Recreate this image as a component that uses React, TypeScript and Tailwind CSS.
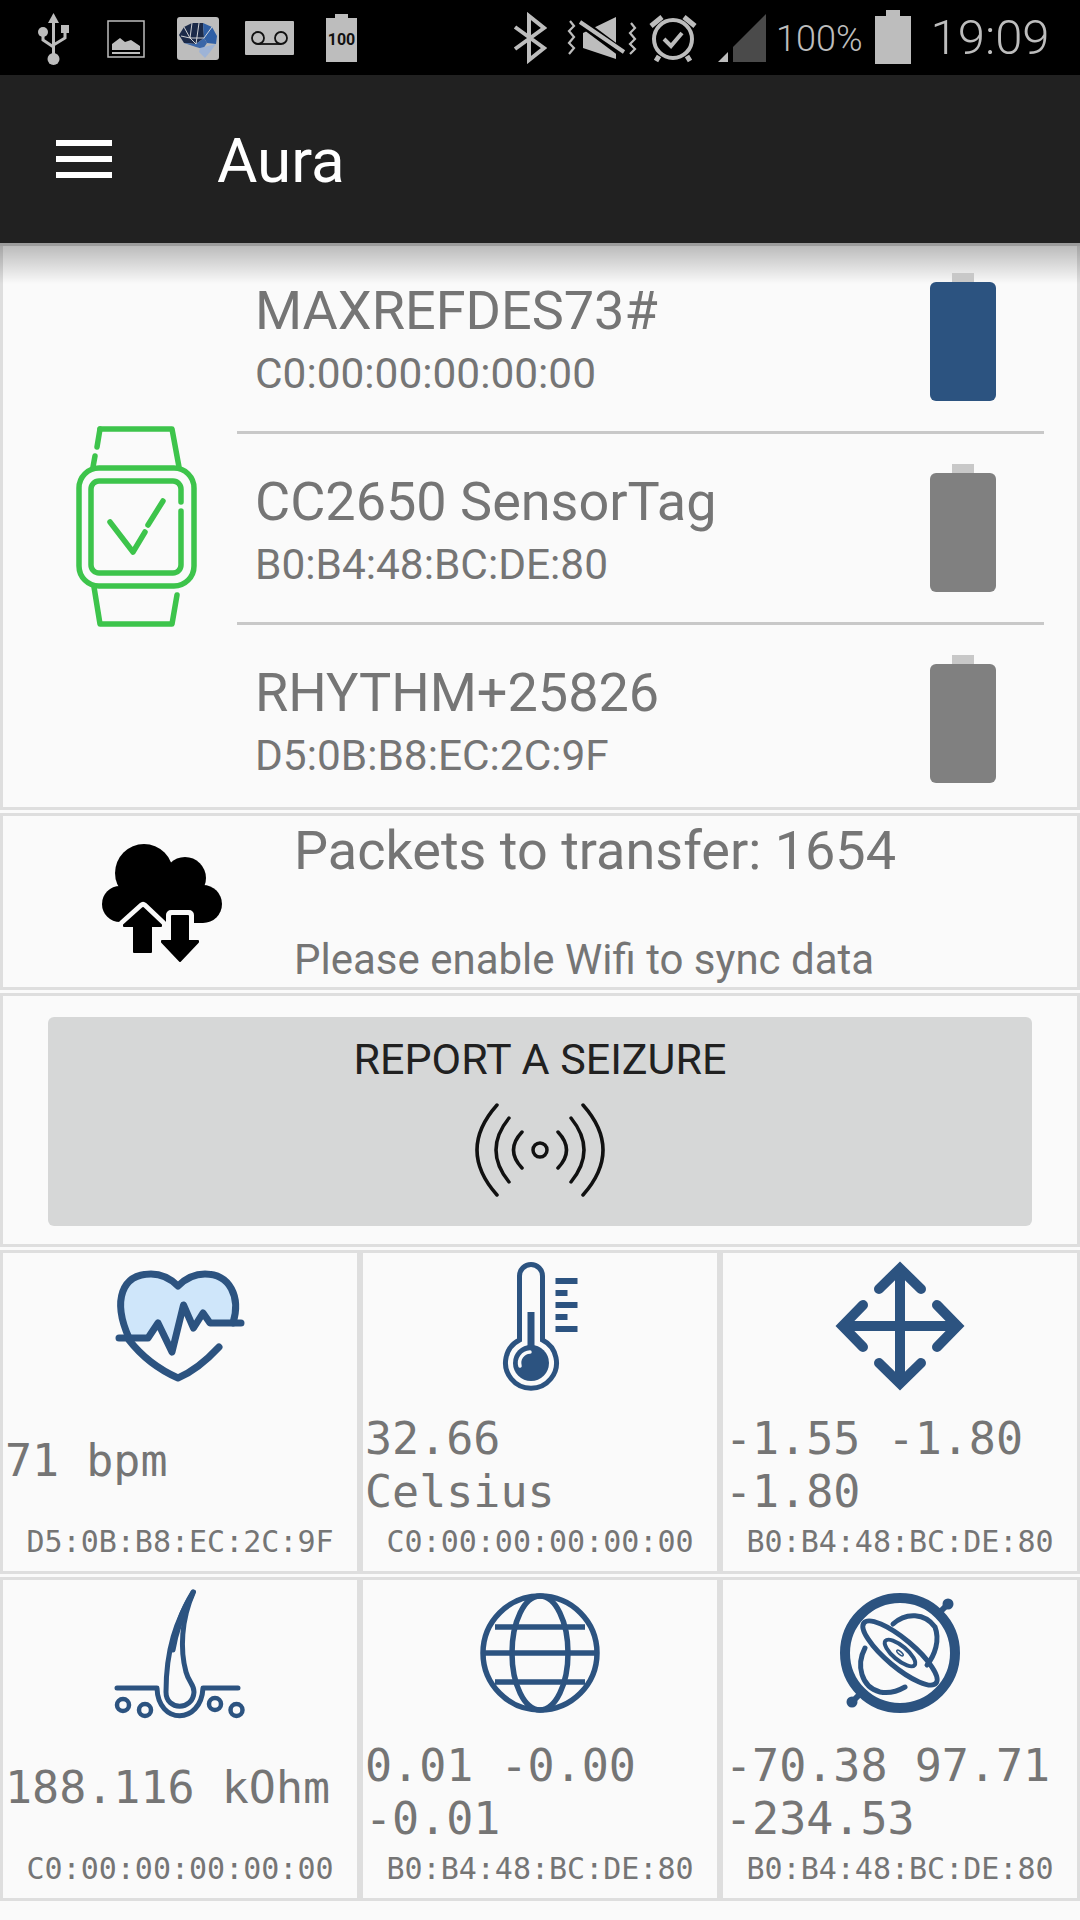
const BLUE = "#2c5380";

function StatusBar() {
  return (
    <div className="flex h-[75px] items-start bg-black text-[#bdbdbd]">
      {/* usb */}
      <svg viewBox="36 12 36 54" className="mt-[12px] ml-[36px] h-[54px] w-[36px]" fill="none" stroke="#bdbdbd" strokeWidth="3">
        <path d="M53.5 23V56M43 34V40L53.5 47M65 33V38L53.5 45" />
        <path d="M53.5 13L59 23H48Z" fill="#bdbdbd" stroke="none" />
        <circle cx="53.5" cy="59" r="6" fill="#bdbdbd" stroke="none" />
        <circle cx="43" cy="32" r="5" fill="#bdbdbd" stroke="none" />
        <rect x="61" y="25" width="8" height="8" fill="#bdbdbd" stroke="none" />
      </svg>
      {/* gallery */}
      <svg viewBox="107 20 38 38" className="mt-[20px] ml-[35px] h-[38px] w-[38px]">
        <rect x="108" y="21" width="36" height="36" fill="none" stroke="#bdbdbd" strokeWidth="1.5" />
        <path d="M112 50V44L120 38L125 42L131 40L140 46V50Z" fill="#bdbdbd" />
        <rect x="112" y="52" width="28" height="2" fill="#bdbdbd" />
      </svg>
      {/* app icon */}
      <svg viewBox="177 17 42 43" className="mt-[17px] ml-[32px] h-[43px] w-[42px]">
        <rect x="177" y="17" width="42" height="43" rx="3" fill="#bdbdbd" />
        <path d="M179 35L184 27L192 23L203 23L204 38L196 44L184 43Z" fill="#1b2a49" />
        <path d="M203 23L212 27L217 36L216 44L207 43L204 38Z" fill="#2f5fa5" />
        <path d="M184 43L196 44L204 38L207 43L203 49L196 47Z" fill="#3a66a8" />
        <path d="M200 48L216 44L210 52L205 58L199 52Z" fill="#9db3d6" />
        <path d="M184 27L190 38L181 36M192 23L190 38L204 38M199 23L196 44M190 38L196 44M212 27L204 38" fill="none" stroke="#e2e2e2" strokeWidth="0.9" />
      </svg>
      {/* voicemail */}
      <svg viewBox="245 21 49 34" className="mt-[21px] ml-[26px] h-[34px] w-[49px]">
        <rect x="245" y="21" width="49" height="34" rx="1" fill="#bdbdbd" />
        <circle cx="258" cy="38" r="6" fill="none" stroke="#111" strokeWidth="1.8" />
        <circle cx="281" cy="38" r="6" fill="none" stroke="#111" strokeWidth="1.8" />
        <path d="M258 44H281" stroke="#111" strokeWidth="1.8" />
      </svg>
      {/* battery 100 */}
      <div className="mt-[14px] ml-[32px] flex w-[31px] flex-col items-center">
        <div className="h-[4px] w-[13px] bg-[#bdbdbd]" />
        <div className="flex h-[44px] w-[31px] items-center justify-center bg-[#bdbdbd] font-['Roboto',sans-serif] text-[16px] leading-none font-bold text-[#111]">
          100
        </div>
      </div>
      {/* bluetooth */}
      <svg viewBox="512 12 36 52" className="mt-[12px] ml-[155px] h-[52px] w-[36px]" fill="none" stroke="#bdbdbd" strokeWidth="4">
        <path d="M515 27L544 48L529 60V16L544 28L515 49" />
      </svg>
      {/* mute + vibrate */}
      <svg viewBox="566 15 71 46" className="mt-[15px] ml-[18px] h-[46px] w-[71px]">
        <path d="M583 33L616 17V59L583 48Z" fill="#bdbdbd" />
        <path d="M578 20L625 55" stroke="#000" strokeWidth="9" />
        <path d="M580 22L624 52" stroke="#bdbdbd" strokeWidth="4" />
        <path d="M570 21L574 26L569 31L574 37L569 43L574 48L569 54" fill="none" stroke="#bdbdbd" strokeWidth="2.2" />
        <path d="M631 23L635 28L630 33L635 39L630 44L635 49L630 54" fill="none" stroke="#bdbdbd" strokeWidth="2.2" />
      </svg>
      {/* alarm */}
      <svg viewBox="648 13 50 50" className="mt-[13px] ml-[11px] h-[50px] w-[50px]" fill="none" stroke="#bdbdbd">
        <circle cx="673" cy="39" r="19" strokeWidth="4" />
        <path d="M651 26L662 17M695 26L684 17" strokeWidth="5" />
        <path d="M659 56L656 61M687 56L690 61" strokeWidth="5" />
        <path d="M664 39L671 46L682 33" strokeWidth="4" />
      </svg>
      {/* signal */}
      <svg viewBox="718 14 48 48" className="mt-[14px] ml-[20px] h-[48px] w-[48px]">
        <path d="M718 62L728 52V62Z" fill="#bdbdbd" />
        <path d="M733 62V47L766 14V62Z" fill="#4a4a4a" />
      </svg>
      <span className="mt-[18px] ml-[10px] font-['Roboto',sans-serif] text-[36px] leading-[42px] font-light text-[#bdbdbd]">100%</span>
      <div className="mt-[10px] ml-[12px] flex w-[36px] flex-col items-center">
        <div className="h-[6px] w-[14px] bg-[#bdbdbd]" />
        <div className="h-[48px] w-[36px] bg-[#bdbdbd]" />
      </div>
      <span className="mt-[9px] ml-[20px] font-['Roboto',sans-serif] text-[49px] leading-[58px] font-light text-[#bdbdbd]">19:09</span>
    </div>
  );
}

function Toolbar() {
  return (
    <div className="flex h-[168px] items-center bg-[#212121]">
      <div className="ml-[56px] flex w-[56px] flex-col gap-[10px]">
        <div className="h-[6px] bg-white" />
        <div className="h-[6px] bg-white" />
        <div className="h-[6px] bg-white" />
      </div>
      <span className="mt-[4px] ml-[105px] font-['Roboto',sans-serif] text-[62px] leading-none text-white">Aura</span>
    </div>
  );
}

function Battery({ color }: { color: string }) {
  return (
    <div className="relative z-10 flex w-[66px] flex-col items-center">
      <div className="h-[9px] w-[22px] bg-[#c8c8c8]" />
      <div className="h-[119px] w-[66px] rounded-[6px]" style={{ backgroundColor: color }} />
    </div>
  );
}

function DeviceRow({ name, mac, color, rowClass }: { name: string; mac: string; color: string; rowClass: string }) {
  return (
    <div className={rowClass}>
      <div className="pt-[6px] pl-[18px] font-['Roboto',sans-serif] text-[#757575]">
        <div className="text-[54px] leading-[64px]">{name}</div>
        <div className="text-[42.4px] leading-[61px]">{mac}</div>
      </div>
      <div className="mr-[48px]">
        <Battery color={color} />
      </div>
    </div>
  );
}

function DevicesCard() {
  return (
    <div className="flex h-[567px] border-[3px] border-[#dedede] bg-[#fafafa]">
      <div className="flex w-[234px] items-center">
        <svg viewBox="3 427 234 201" className="h-[201px] w-[234px]" fill="none" stroke="#3dc44b" strokeWidth="5.5" strokeLinecap="round" strokeLinejoin="round">
          <rect x="79" y="469" width="115" height="118" rx="20" />
          <path d="M181 512V566a8 8 0 0 1-8 8H99a8 8 0 0 1-8-8V490a8 8 0 0 1 8-8H173a8 8 0 0 1 8 8V503" />
          <path d="M100 430L97 448M95 457L93 468" />
          <path d="M100 430H172L179 468" />
          <path d="M94 588L100 625H172L177 596" />
          <path d="M110 523L133 553L145 533M148 526L163 502" />
        </svg>
      </div>
      <div className="w-[807px]">
        <DeviceRow
          name="MAXREFDES73#"
          mac="C0:00:00:00:00:00"
          color={BLUE}
          rowClass="flex h-[185px] items-start justify-between pt-[27px]"
        />
        <div className="h-[3px] bg-[#c8c8c8]" />
        <DeviceRow
          name="CC2650 SensorTag"
          mac="B0:B4:48:BC:DE:80"
          color="#808080"
          rowClass="flex h-[188px] items-start justify-between pt-[30px]"
        />
        <div className="h-[3px] bg-[#c8c8c8]" />
        <DeviceRow
          name="RHYTHM+25826"
          mac="D5:0B:B8:EC:2C:9F"
          color="#808080"
          rowClass="flex h-[182px] items-start justify-between pt-[30px]"
        />
      </div>
    </div>
  );
}

function SyncCard() {
  return (
    <div className="flex h-[177px] border-[3px] border-[#dedede] bg-[#fafafa]">
      <svg viewBox="3 816 291 171" className="h-[171px] w-[291px]">
        <circle cx="144" cy="873" r="29" />
        <circle cx="185" cy="878" r="21" />
        <circle cx="120" cy="904" r="18" />
        <circle cx="203" cy="904" r="19" />
        <rect x="120" y="878" width="83" height="45" />
        <g stroke="#fafafa" strokeWidth="10" strokeLinejoin="round" fill="#fafafa">
          <path d="M143 907L162 925V927H152V953H133V927H123V925Z" />
          <path d="M171 915H189V940H199V942L180 962L161 942V940H171Z" />
        </g>
        <g stroke="#000" strokeWidth="2" strokeLinejoin="round">
          <path d="M143 908L161 925V926H151V952H134V926H124V925Z" />
          <path d="M172 916H188V941H198V942L180 961L162 942V941H172Z" />
        </g>
      </svg>
      <div className="flex flex-1 flex-col justify-between font-['Roboto',sans-serif] text-[#757575]">
        <div className="text-[54px] leading-[70px]">Packets to transfer: 1654</div>
        <div className="text-[42px] leading-[54px]">Please enable Wifi to sync data</div>
      </div>
    </div>
  );
}

function ReportCard() {
  return (
    <div className="h-[254px] border-[3px] border-[#dedede] bg-[#fafafa] pt-[21px]">
      <div className="mx-[45px] flex h-[209px] flex-col items-center rounded-[6px] bg-[#d6d7d7] pt-[17px]">
        <div className="font-['Roboto',sans-serif] text-[43px] leading-[50px] text-[#212121]">REPORT A SEIZURE</div>
        <svg viewBox="470 1100 140 100" className="mt-[16px] h-[100px] w-[140px]" fill="none" stroke="#111" strokeWidth="3.5" strokeLinecap="round">
          <circle cx="540" cy="1150" r="7" />
          <path d="M522 1132Q505 1150 522 1168M558 1132Q575 1150 558 1168" />
          <path d="M509 1118Q483 1150 509 1182M571 1118Q597 1150 571 1182" />
          <path d="M497 1105Q457 1150 497 1195M583 1105Q623 1150 583 1195" />
        </svg>
      </div>
    </div>
  );
}

function HeartIcon() {
  return (
    <svg viewBox="3 1253 354 144" className="h-[144px] w-[354px]" fill="none" stroke={BLUE} strokeWidth="7" strokeLinecap="round" strokeLinejoin="round">
      <path d="M124 1335C114 1295 125 1274 151 1274C162 1274 171 1279 178 1286C185 1279 194 1274 205 1274C228 1274 240 1295 234 1321H210L203 1313L193.5 1328L183.5 1305L172 1352L158 1323L148 1338H128Z" fill="#cfe6fa" stroke="none" />
      <path d="M129 1338C112 1300 122 1274 151 1274C162 1274 171 1279 178 1286C185 1279 194 1274 205 1274C230 1274 241 1297 233 1323" />
      <path d="M119 1338H148L158 1323L172 1352L183.5 1305L193.5 1328L203 1313L210 1323H241" />
      <path d="M129 1340C143 1358 160 1370 178 1378C192 1372 206 1361 219 1347" />
    </svg>
  );
}

function ThermometerIcon() {
  return (
    <svg viewBox="363 1253 354 144" className="h-[144px] w-[354px]" fill={BLUE} stroke="none">
      <path d="M519.5 1340V1276A11.5 11.5 0 0 1 542.5 1276V1340A25.5 25.5 0 1 1 519.5 1340Z" fill="none" stroke={BLUE} strokeWidth="5" />
      <rect x="527.5" y="1312" width="7" height="40" />
      <circle cx="531" cy="1363" r="18" />
      <path d="M520 1366A11 11 0 0 1 530 1352" fill="none" stroke="#fafafa" strokeWidth="3.5" strokeLinecap="round" />
      <rect x="555.5" y="1278" width="22" height="6" />
      <rect x="555.5" y="1290" width="12" height="6" />
      <rect x="555.5" y="1302" width="22" height="6" />
      <rect x="555.5" y="1314" width="12" height="6" />
      <rect x="555.5" y="1326" width="22" height="6" />
    </svg>
  );
}

function MoveIcon() {
  return (
    <svg viewBox="723 1253 354 144" className="h-[144px] w-[354px]" fill="none" stroke={BLUE} strokeWidth="10" strokeLinecap="round">
      <path d="M900 1270V1382M844 1326H956" strokeLinecap="butt" />
      <path d="M879 1289L900 1268.5L921 1289" />
      <path d="M879 1363L900 1383.5L921 1363" />
      <path d="M863 1305L842.5 1326L863 1347" />
      <path d="M937 1305L957.5 1326L937 1347" />
    </svg>
  );
}

function HairIcon() {
  return (
    <svg viewBox="3 1580 354 144" className="h-[144px] w-[354px]" fill="none" stroke={BLUE} strokeWidth="5" strokeLinecap="round" strokeLinejoin="round">
      <path d="M193.5 1592C176 1620 166 1650 166 1692C166 1711 193 1711 194 1692C194 1684 189 1683 186 1672C180 1650 181 1620 193.5 1592Z" />
      <path d="M193 1592C182 1610 176 1626 173 1650C177 1626 185 1612 193 1592Z" fill={BLUE} />
      <path d="M117 1688H157C158 1725 201 1725 203 1688H238" />
      <circle cx="123" cy="1705" r="6" strokeWidth="4.5" />
      <circle cx="145" cy="1710" r="6" strokeWidth="4.5" />
      <circle cx="215" cy="1704" r="6" strokeWidth="4.5" />
      <circle cx="236.5" cy="1710" r="6" strokeWidth="4.5" />
    </svg>
  );
}

function GlobeIcon() {
  return (
    <svg viewBox="363 1580 354 144" className="h-[144px] w-[354px]" fill="none" stroke={BLUE} strokeWidth="5.5">
      <circle cx="540" cy="1653" r="57" />
      <ellipse cx="540" cy="1653" rx="28" ry="57" />
      <path d="M495 1627H585M483 1653H597M495 1682H585" />
    </svg>
  );
}

function GyroIcon() {
  return (
    <svg viewBox="723 1580 354 144" className="h-[144px] w-[354px]" fill="none" stroke={BLUE} strokeWidth="5" strokeLinecap="round">
      <circle cx="900" cy="1653" r="55" strokeWidth="10" />
      <path d="M940 1612L948 1604M860 1694L852 1702" strokeWidth="6" />
      <circle cx="948" cy="1604" r="5.5" fill={BLUE} stroke="none" />
      <circle cx="852" cy="1702" r="5.5" fill={BLUE} stroke="none" />
      <ellipse cx="900" cy="1653" rx="47" ry="14" transform="rotate(40 900 1653)" strokeWidth="5" />
      <ellipse cx="900" cy="1653" rx="19" ry="7" transform="rotate(40 900 1653)" strokeWidth="4" />
      <ellipse cx="900" cy="1653" rx="4" ry="1.5" transform="rotate(40 900 1653)" strokeWidth="1.5" />
      <path d="M893 1624C906 1612 925 1613 935 1627C940 1640 935 1655 927 1665" strokeWidth="5" />
      <path d="M865 1648C856 1665 861 1687 880 1692C890 1694 898 1691 905 1687" strokeWidth="5" />
    </svg>
  );
}

function SensorCell({ icon, value, mac, valueClass }: { icon: React.ReactNode; value: string; mac: string; valueClass: string }) {
  return (
    <div className="flex h-[324px] w-[360px] flex-col border-[3px] border-[#dedede] bg-[#fafafa]">
      {icon}
      <div className={valueClass}>
        <div>{value}</div>
      </div>
      <div className="mt-[1px] text-center font-['DejaVu_Sans_Mono',monospace] text-[30px] leading-[32px] text-[#757575]">{mac}</div>
    </div>
  );
}

const oneLine = "flex h-[128px] items-center pb-[2px] pl-[2px] font-['DejaVu_Sans_Mono',monospace] text-[45px] leading-[53px] text-[#757575]";
const twoLines = "flex h-[128px] items-center pt-[8px] pl-[2px] font-['DejaVu_Sans_Mono',monospace] text-[45px] leading-[53px] text-[#757575]";

export default function App() {
  return (
    <div className="relative h-[1920px] w-[1080px] overflow-hidden bg-[#fafafa]">
      <StatusBar />
      <Toolbar />
      <div className="flex flex-col gap-[3px]">
        <DevicesCard />
        <SyncCard />
        <ReportCard />
        <div className="grid grid-cols-3 gap-y-[3px]">
          <SensorCell icon={<HeartIcon />} value="71 bpm" mac="D5:0B:B8:EC:2C:9F" valueClass={oneLine} />
          <SensorCell icon={<ThermometerIcon />} value="32.66 Celsius" mac="C0:00:00:00:00:00" valueClass={twoLines} />
          <SensorCell icon={<MoveIcon />} value="-1.55 -1.80 -1.80" mac="B0:B4:48:BC:DE:80" valueClass={twoLines} />
          <SensorCell icon={<HairIcon />} value="188.116 kOhm" mac="C0:00:00:00:00:00" valueClass={oneLine} />
          <SensorCell icon={<GlobeIcon />} value="0.01 -0.00 -0.01" mac="B0:B4:48:BC:DE:80" valueClass={twoLines} />
          <SensorCell icon={<GyroIcon />} value="-70.38 97.71 -234.53" mac="B0:B4:48:BC:DE:80" valueClass={twoLines} />
        </div>
      </div>
      {/* toolbar drop shadow falling over the first card */}
      <div className="absolute top-[243px] left-0 h-[3px] w-full bg-[#9c9c9c]" />
      <div className="absolute top-[246px] left-0 h-[38px] w-full bg-gradient-to-b from-[#00000040] to-transparent" />
    </div>
  );
}
